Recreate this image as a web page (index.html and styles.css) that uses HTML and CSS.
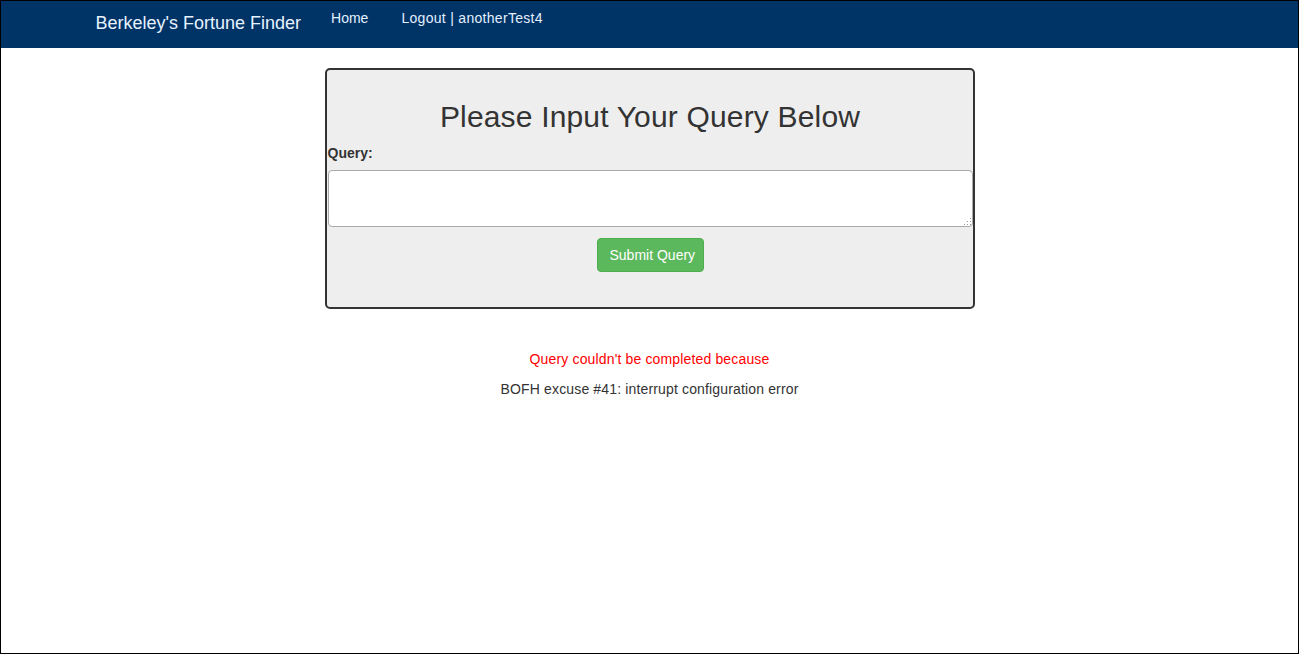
FILE: index.html
```html
<!DOCTYPE html>
<html lang="en">
<head>
<meta charset="utf-8">
<title>Berkeley's Fortune Finder</title>
<link rel="stylesheet" href="styles.css">
</head>
<body>
<div class="page">
  <nav class="navbar">
    <div class="nav-container">
      <a class="brand" href="#">Berkeley's Fortune Finder</a>
      <ul class="nav-links">
        <li><a href="#">Home</a></li>
        <li><a class="user-link" href="#">Logout | anotherTest4</a></li>
      </ul>
    </div>
  </nav>
  <main class="content">
    <form class="query-card">
      <h2 class="query-title">Please Input Your Query Below</h2>
      <label class="query-label" for="query">Query:</label>
      <div class="input-wrap">
        <textarea id="query" class="query-input"></textarea>
        <svg class="grip" width="10" height="10" viewBox="0 0 10 10" aria-hidden="true">
          <rect x="8" y="2" width="1" height="1"/>
          <rect x="5" y="5" width="1" height="1"/>
          <rect x="8" y="5" width="1" height="1"/>
          <rect x="2" y="8" width="1" height="1"/>
          <rect x="5" y="8" width="1" height="1"/>
          <rect x="8" y="8" width="1" height="1"/>
        </svg>
      </div>
      <div class="actions">
        <button type="button" class="btn-submit">Submit Query</button>
      </div>
    </form>
    <p class="error">Query couldn't be completed because</p>
    <p class="fortune">BOFH excuse #41: interrupt configuration error</p>
  </main>
</div>
</body>
</html>
```

FILE: styles.css
```css
html, body {
  margin: 0;
  padding: 0;
  background: #fff;
}

body {
  font-family: "Liberation Sans", Arial, Helvetica, sans-serif;
  font-size: 14px;
  line-height: 20px;
  color: #333;
}

.page {
  box-sizing: border-box;
  height: 654px;
  border: 1px solid #000;
  overflow: hidden;
}

.navbar {
  box-sizing: border-box;
  height: 48px;
  margin: -1px -1px 0;
  background: #003366;
  border: 1px solid #f4c18e;
  border-bottom: 0;
}

.nav-container {
  width: 1170px;
  margin: 0 auto;
  padding: 0 15px;
  box-sizing: border-box;
  display: flex;
  align-items: flex-start;
}

.brand {
  display: block;
  padding: 12px 15px 0 16px;
  font-size: 18px;
  line-height: 20px;
  color: #e6f2ff;
  text-decoration: none;
}

.nav-links {
  display: flex;
  list-style: none;
  margin: 0;
  padding: 0;
}

.nav-links a {
  display: block;
  padding: 7px 16px 0 15px;
  line-height: 20px;
  color: #e2f0ff;
  text-decoration: none;
}

.nav-links .user-link {
  padding-left: 17px;
  letter-spacing: 0.3px;
}

.content {
  display: flex;
  flex-direction: column;
  align-items: center;
  letter-spacing: 0.15px;
}

.query-card {
  box-sizing: border-box;
  width: 650px;
  margin-top: 20px;
  padding: 0 0 35px 1px;
  background: #eeeeee;
  border: 2px solid #333;
  border-radius: 5px;
  display: flex;
  flex-direction: column;
}

.query-title {
  margin: 30px 0 10px;
  font-size: 30px;
  line-height: 33px;
  font-weight: 500;
  letter-spacing: 0.17px;
  text-align: center;
  color: #333;
}

.query-label {
  font-weight: bold;
  line-height: 20px;
  letter-spacing: 0;
}

.input-wrap {
  position: relative;
  margin-top: 7px;
  display: flex;
}

.query-input {
  box-sizing: border-box;
  width: 100%;
  height: 57px;
  margin: 0;
  border: 1px solid #aaa;
  border-radius: 4px;
  background: #fff;
  font-family: inherit;
  font-size: 14px;
  resize: none;
}

.grip {
  position: absolute;
  right: 1px;
  bottom: 1px;
  fill: #999;
}

.actions {
  display: flex;
  justify-content: center;
  margin-top: 11px;
}

.btn-submit {
  box-sizing: border-box;
  height: 34px;
  width: 107px;
  padding: 6px 6px 6px 12px;
  border: 1px solid #4cae4c;
  border-radius: 4px;
  background: #5cb85c;
  color: #fff;
  font-family: inherit;
  font-size: 14px;
  line-height: 20px;
  text-align: left;
  cursor: pointer;
}

.error {
  margin: 40px 0 10px;
  color: #ff0000;
}

.fortune {
  margin: 0;
  color: #333;
}
```
